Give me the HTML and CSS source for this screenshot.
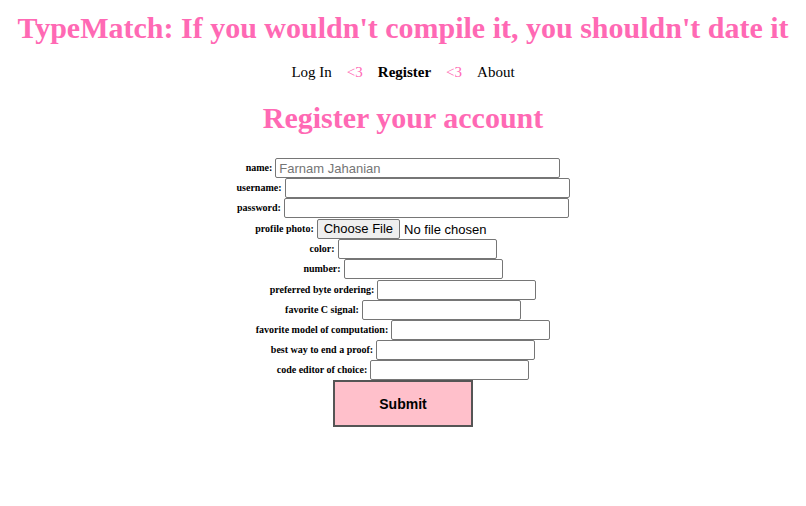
FILE: index.html
```html
<!DOCTYPE html>
<html>
<head>
<meta charset="utf-8">
<link rel="stylesheet" href="styles.css">
</head>
<body>
<h1 class="title">TypeMatch: If you wouldn't compile it, you shouldn't date it</h1>
<nav class="nav">
  <span class="nav-link">Log In</span>
  <span class="heart">&lt;3</span>
  <span class="nav-link current">Register</span>
  <span class="heart">&lt;3</span>
  <span class="nav-link">About</span>
</nav>
<h2 class="subtitle">Register your account</h2>
<form class="form">
  <div class="row"><label>name:</label><input class="wide" type="text" placeholder="Farnam Jahanian"></div>
  <div class="row"><label>username:</label><input class="wide" type="text"></div>
  <div class="row"><label>password:</label><input class="wide" type="password"></div>
  <div class="row row-tall"><label>profile photo:</label><span class="file"><span class="file-btn">Choose File</span><span class="file-text">No file chosen</span></span></div>
  <div class="row"><label>color:</label><input type="text"></div>
  <div class="row"><label>number:</label><input type="text"></div>
  <div class="row row-tall"><label>preferred byte ordering:</label><input type="text"></div>
  <div class="row"><label>favorite C signal:</label><input type="text"></div>
  <div class="row"><label>favorite model of computation:</label><input type="text"></div>
  <div class="row"><label>best way to end a proof:</label><input type="text"></div>
  <div class="row"><label>code editor of choice:</label><input type="text"></div>
  <div class="row row-submit"><button type="button" class="submit">Submit</button></div>
</form>
</body>
</html>
```
FILE: styles.css
```css
body {
  margin: 8px;
  font-family: "Liberation Serif", "Times New Roman", serif;
  background: #fff;
  color: #000;
}
.title {
  margin: 0;
  text-align: center;
  font-size: 30px;
  line-height: 40px;
  white-space: nowrap;
  color: #ff69b4;
  font-weight: bold;
}
.nav {
  margin-top: 14px;
  display: flex;
  justify-content: center;
  gap: 15px;
  font-size: 15px;
  line-height: 20px;
}
.current { font-weight: bold; }
.heart { color: #ff69b4; }
.subtitle {
  margin: 16px 0 0;
  text-align: center;
  font-size: 30px;
  line-height: 40px;
  color: #ff69b4;
}
.form {
  margin-top: 20px;
  display: flex;
  flex-direction: column;
}
.row {
  display: flex;
  justify-content: center;
  align-items: flex-start;
  height: 20px;
  gap: 3px;
}
.row-tall { height: 21px; align-items: flex-end; }
.row label {
  font-size: 10px;
  line-height: 20px;
  font-weight: bold;
}
.row input {
  box-sizing: border-box;
  width: 159px;
  height: 20px;
  margin: 0;
  border: 1px solid #767676;
  border-radius: 2px;
  padding: 1px 3px;
  font-family: "Liberation Sans", Arial, sans-serif;
  font-size: 13px;
}
.row input.wide { width: 285px; }
.row input::placeholder { color: #757575; }
.file {
  width: 234px;
  display: flex;
  align-items: center;
  font-family: "Liberation Sans", Arial, sans-serif;
  font-size: 13px;
}
.file-btn {
  box-sizing: border-box;
  height: 20px;
  padding: 2px 6px;
  background: #efefef;
  border: 1px solid #767676;
  border-radius: 2px;
  margin-right: 4px;
  line-height: 14px;
}
.row-submit { height: 47px; }
.submit {
  box-sizing: border-box;
  width: 140px;
  height: 47px;
  background: #ffc0cb;
  border: 2px solid #555;
  border-radius: 0;
  font-family: "Liberation Sans", Arial, sans-serif;
  font-size: 14px;
  font-weight: bold;
  color: #000;
}
```
